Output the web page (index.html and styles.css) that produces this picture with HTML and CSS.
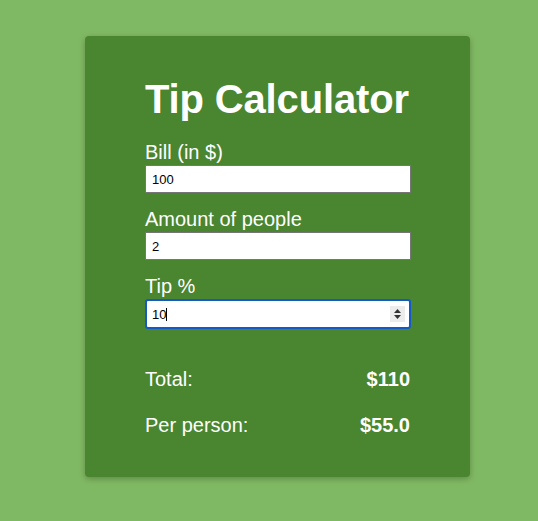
FILE: index.html
```html
<!DOCTYPE html>
<html>
<head>
<meta charset="utf-8">
<link rel="stylesheet" href="styles.css">
</head>
<body>
<div class="card">
  <h1 class="title">Tip Calculator</h1>
  <div class="field">
    <label class="label">Bill (in $)</label>
    <input class="input" type="text" value="100">
  </div>
  <div class="field">
    <label class="label">Amount of people</label>
    <input class="input" type="text" value="2">
  </div>
  <div class="field">
    <label class="label">Tip %</label>
    <div class="input-wrap">
      <input class="input input-focus" type="text" value="10">
      <span class="caret"></span>
      <span class="spinner">
        <svg width="9" height="12" viewBox="0 0 9 12"><path d="M4.5 1 L8 5 H1 Z M4.5 11 L8 7 H1 Z" fill="#333"/></svg>
      </span>
    </div>
  </div>
  <div class="results">
    <div class="row"><span>Total:</span><strong>$110</strong></div>
    <div class="row"><span>Per person:</span><strong>$55.0</strong></div>
  </div>
</div>
</body>
</html>
```
FILE: styles.css
```css
html, body {
  margin: 0;
  padding: 0;
}
body {
  background: #80b963;
  font-family: "Liberation Sans", Arial, sans-serif;
  height: 521px;
}
.card {
  box-sizing: border-box;
  width: 385px;
  margin: 36px 0 0 85px;
  padding: 35px 60px 39px;
  background: #4a8530;
  border-radius: 4px;
  box-shadow: 0 2px 6px rgba(0, 0, 0, 0.25);
  color: #fff;
}
.title {
  font-size: 40px;
  font-weight: bold;
  margin: 0 0 13px;
  line-height: 56px;
  white-space: nowrap;
  letter-spacing: -0.15px;
}
.field {
  display: flex;
  flex-direction: column;
  margin-bottom: 14px;
}
.label {
  font-size: 20px;
  line-height: 25px;
}
.input {
  box-sizing: border-box;
  width: 266px;
  height: 28px;
  border: 1px solid #767676;
  background: #fff;
  font-family: "Liberation Sans", Arial, sans-serif;
  font-size: 13px;
  padding: 0 6px;
  margin: 0;
  color: #000;
  outline: none;
}
.input-wrap {
  position: relative;
  width: 266px;
}
.input-focus {
  height: 30px;
  border: 2px solid #1559c9;
  border-radius: 3px;
  padding: 0 5px;
}
.caret {
  position: absolute;
  left: 21px;
  top: 9px;
  width: 1px;
  height: 13px;
  background: #000;
}
.spinner {
  position: absolute;
  right: 6px;
  top: 7px;
  width: 15px;
  height: 16px;
  background: #ececec;
  display: flex;
  align-items: center;
  justify-content: center;
}
.results {
  margin-top: 38px;
}
.row {
  display: flex;
  justify-content: space-between;
  font-size: 20px;
  line-height: 25px;
  margin-bottom: 21px;
}
.row:last-child {
  margin-bottom: 0;
}
.row strong {
  font-weight: bold;
}
```
